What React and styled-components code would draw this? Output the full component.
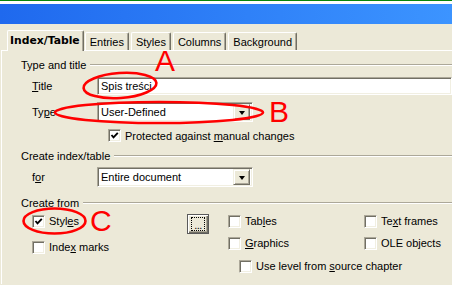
import React from "react";
import styled, { createGlobalStyle } from "styled-components";

const GlobalStyle = createGlobalStyle`
  html, body {
    margin: 0;
    padding: 0;
  }
  body {
    width: 452px;
    height: 285px;
    overflow: hidden;
    background: #ece9d8;
    font-family: "Liberation Sans", Arial, sans-serif;
    font-size: 11px;
    color: #000;
  }
`;

const Screen = styled.div`
  position: relative;
  width: 452px;
  height: 285px;
  overflow: hidden;
  background: #ece9d8;
`;

// strip of the window frame above the dialog
const TopEdge = styled.div`
  height: 3px;
  border-top: 1px solid #0b850b;
  background: #fff;
`;

const TitleBar = styled.div`
  height: 20px;
  background: linear-gradient(90deg, #1f69ee 0%, #2f81f8 55%, #3c94ff 100%);
`;

const TabStrip = styled.div`
  display: flex;
  align-items: flex-end;
  height: 26px;
  padding-left: 7px;
`;

const Tab = styled.div`
  position: relative;
  z-index: ${(p) => (p.$active ? 1 : 0)};
  box-sizing: border-box;
  display: flex;
  align-items: center;
  height: ${(p) => (p.$active ? 21 : 18)}px;
  margin-bottom: ${(p) => (p.$active ? -1 : 0)}px;
  margin-left: ${(p) => (p.$active ? 0 : p.$first ? 1 : 2)}px;
  padding: ${(p) => (p.$active ? "0 3px 1px 2px" : "1px 4px 0 4px")};
  background: #ece9d8;
  border-top: 1px solid #fff;
  border-left: 1px solid #fff;
  border-right: 1px solid #716f64;
  box-shadow: inset -1px 0 #aca899;
  border-radius: 2px 2px 0 0;
  font-family: ${(p) =>
    p.$active ? '"DejaVu Sans", Verdana, sans-serif' : "inherit"};
  font-weight: ${(p) => (p.$active ? 700 : 400)};
  font-size: ${(p) => (p.$active ? "10.8px" : "11px")};
  white-space: nowrap;
`;

const TabPage = styled.div`
  margin-left: 1px;
  height: 234px;
  border-left: 1px solid #fff;
  border-top: 1px solid #fff;
  padding-top: 7px;
  box-sizing: border-box;
`;

const GroupHeader = styled.div`
  display: flex;
  align-items: center;
  height: 14px;
  margin: ${(p) => p.$gap || 0}px 0 0 19px;
  white-space: nowrap;
  &::after {
    content: "";
    flex: 1;
    margin-left: 4px;
    border-top: 1px solid #aca899;
    border-bottom: 1px solid #fff;
  }
`;

const FieldRow = styled.div`
  display: flex;
  align-items: center;
  height: ${(p) => p.$h}px;
  margin-top: ${(p) => p.$gap}px;
  padding-left: ${(p) => p.$indent || 30}px;
`;

const FieldLabel = styled.div`
  width: 65px;
  flex: none;
`;

const sunken = `
  box-sizing: border-box;
  background: #fff;
  border: 1px solid;
  border-color: #aca899 #fff #fff #aca899;
  box-shadow: inset 1px 1px #716f64, inset -1px -1px #f1efe2;
`;

const TextInput = styled.div`
  ${sunken}
  flex: 1;
  height: 18px;
  display: flex;
  align-items: center;
  padding-left: 3px;
  white-space: nowrap;
`;

const Combo = styled.div`
  ${sunken}
  width: 156px;
  height: 20px;
  display: flex;
  align-items: center;
  padding: 2px 2px 2px 3px;
`;

const ComboText = styled.div`
  flex: 1;
  white-space: nowrap;
`;

const ComboButton = styled.div`
  box-sizing: border-box;
  width: 17px;
  height: 16px;
  display: flex;
  align-items: center;
  justify-content: center;
  background: #ece9d8;
  border: 1px solid;
  border-color: #f1efe2 #716f64 #716f64 #f1efe2;
  box-shadow: inset 1px 1px #fff, inset -1px -1px #aca899;
`;

const Arrow = styled.span`
  width: 0;
  height: 0;
  border-left: 3.5px solid transparent;
  border-right: 3.5px solid transparent;
  border-top: 4px solid #000;
  margin-top: 1px;
`;

const CheckRow = styled.div`
  display: flex;
  align-items: center;
  height: 14px;
  margin-top: ${(p) => p.$gap || 0}px;
  padding-left: ${(p) => p.$indent || 0}px;
  white-space: nowrap;
`;

const Box = styled.span`
  ${sunken}
  flex: none;
  width: 13px;
  height: 13px;
  display: inline-flex;
  align-items: center;
  justify-content: center;
  margin-right: 4px;
`;

const CreateFrom = styled.div`
  display: flex;
  margin-top: 4px;
  padding-left: 30px;
`;

const LeftColumn = styled.div`
  width: 155px;
  flex: none;
`;

const DotsButton = styled.div`
  position: relative;
  flex: none;
  box-sizing: border-box;
  width: 22px;
  height: 20px;
  margin-right: 19px;
  background: #ece9d8;
  border: 1px solid #5a5a5a;
  box-shadow: inset 1px 1px #fff, inset -1px -1px #716f64,
    inset -2px -2px #aca899;
  display: flex;
  align-items: flex-end;
  justify-content: center;
  padding-bottom: 4px;
  line-height: 8px;
  letter-spacing: -0.5px;
  &::before {
    content: "";
    position: absolute;
    left: 3px;
    top: 2px;
    right: 3px;
    bottom: 2px;
    border: 1px dotted #000;
  }
`;

const RightColumn = styled.div`
  display: grid;
  grid-template-columns: 136px auto;
  row-gap: 8px;
`;

const WideCell = styled.div`
  grid-column: 1 / 3;
`;

const Overlay = styled.svg`
  position: absolute;
  left: 0;
  top: 0;
  pointer-events: none;
`;

const Mark = styled.span`
  position: absolute;
  left: ${(p) => p.$x}px;
  top: ${(p) => p.$y}px;
  font-family: "Liberation Sans", Arial, sans-serif;
  font-size: 30px;
  line-height: 22px;
  color: #ff0000;
`;

const Tick = () => (
  <svg width="9" height="9" viewBox="0 0 9 9">
    <path d="M1.5 4 L3.5 6.3 L7.8 1.8" fill="none" stroke="#000" strokeWidth="1.9" />
  </svg>
);

const Check = ({ checked, children, gap, indent }) => (
  <CheckRow $gap={gap} $indent={indent}>
    <Box>{checked && <Tick />}</Box>
    <span>{children}</span>
  </CheckRow>
);

const Dropdown = ({ value }) => (
  <Combo>
    <ComboText>{value}</ComboText>
    <ComboButton>
      <Arrow />
    </ComboButton>
  </Combo>
);

const tabs = ["Entries", "Styles", "Columns", "Background"];

export default function App() {
  return (
    <Screen>
      <GlobalStyle />
      <TopEdge />
      <TitleBar />
      <TabStrip>
        <Tab $active>Index/Table</Tab>
        {tabs.map((t, i) => (
          <Tab key={t} $first={i === 0}>
            {t}
          </Tab>
        ))}
      </TabStrip>
      <TabPage>
        <GroupHeader>Type and title</GroupHeader>
        <FieldRow $h={18} $gap={5}>
          <FieldLabel>
            <u>T</u>itle
          </FieldLabel>
          <TextInput>Spis treści</TextInput>
        </FieldRow>
        <FieldRow $h={20} $gap={7}>
          <FieldLabel>
            Ty<u>p</u>e
          </FieldLabel>
          <Dropdown value="User-Defined" />
        </FieldRow>
        <FieldRow $h={13} $gap={7} $indent={106}>
          <Check checked>
            Protected against <u>m</u>anual changes
          </Check>
        </FieldRow>

        <GroupHeader $gap={7}>Create index/table</GroupHeader>
        <FieldRow $h={20} $gap={4}>
          <FieldLabel>
            f<u>o</u>r
          </FieldLabel>
          <Dropdown value="Entire document" />
        </FieldRow>

        <GroupHeader $gap={9}>Create from</GroupHeader>
        <CreateFrom>
          <LeftColumn>
            <Check checked>
              Styl<u>e</u>s
            </Check>
            <Check gap={12}>
              Inde<u>x</u> marks
            </Check>
          </LeftColumn>
          <DotsButton>...</DotsButton>
          <RightColumn>
            <Check>
              Tab<u>l</u>es
            </Check>
            <Check>
              Te<u>x</u>t frames
            </Check>
            <Check>
              <u>G</u>raphics
            </Check>
            <Check>OLE objects</Check>
            <WideCell>
              <Check indent={11} gap={1}>
                Use level from <u>s</u>ource chapter
              </Check>
            </WideCell>
          </RightColumn>
        </CreateFrom>
      </TabPage>

      <Overlay width="452" height="285" viewBox="0 0 452 285">
        <g fill="none" stroke="#ff0000" strokeWidth="2.6">
          <ellipse cx="120" cy="85.5" rx="36.5" ry="12.5" transform="rotate(-4 120 85.5)" />
          <ellipse cx="159" cy="112.5" rx="104" ry="10.5" />
          <ellipse cx="54.5" cy="221" rx="31" ry="12.5" />
        </g>
      </Overlay>
      <Mark $x={155} $y={50}>A</Mark>
      <Mark $x={269} $y={101}>B</Mark>
      <Mark $x={90} $y={210}>C</Mark>
    </Screen>
  );
}
